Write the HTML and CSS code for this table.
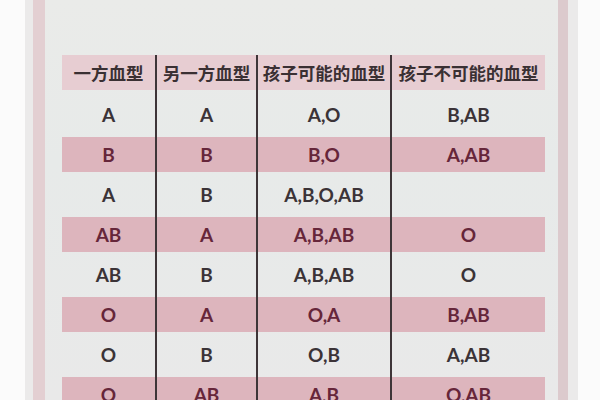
FILE: index.html
```html
<!DOCTYPE html>
<html lang="zh">
<head>
<meta charset="utf-8">
<link rel="stylesheet" href="styles.css">
</head>
<body>
<div class="sheet">
  <div class="panel">
    <div class="table">
      <div class="cell head">一方血型</div>
      <div class="cell head sep">另一方血型</div>
      <div class="cell head sep">孩子可能的血型</div>
      <div class="cell head sep">孩子不可能的血型</div>

      <div class="cell">A</div>
      <div class="cell sep">A</div>
      <div class="cell sep">A,O</div>
      <div class="cell sep">B,AB</div>

      <div class="cell pink">B</div>
      <div class="cell pink sep">B</div>
      <div class="cell pink sep">B,O</div>
      <div class="cell pink sep">A,AB</div>

      <div class="cell">A</div>
      <div class="cell sep">B</div>
      <div class="cell sep">A,B,O,AB</div>
      <div class="cell sep"></div>

      <div class="cell pink">AB</div>
      <div class="cell pink sep">A</div>
      <div class="cell pink sep">A,B,AB</div>
      <div class="cell pink sep">O</div>

      <div class="cell">AB</div>
      <div class="cell sep">B</div>
      <div class="cell sep">A,B,AB</div>
      <div class="cell sep">O</div>

      <div class="cell pink">O</div>
      <div class="cell pink sep">A</div>
      <div class="cell pink sep">O,A</div>
      <div class="cell pink sep">B,AB</div>

      <div class="cell">O</div>
      <div class="cell sep">B</div>
      <div class="cell sep">O,B</div>
      <div class="cell sep">A,AB</div>

      <div class="cell pink">O</div>
      <div class="cell pink sep">AB</div>
      <div class="cell pink sep">A,B</div>
      <div class="cell pink sep">O,AB</div>
    </div>
  </div>
</div>
</body>
</html>
```

FILE: styles.css
```css
html, body {
  margin: 0;
  padding: 0;
  background: #fbfbfb;
  height: 400px;
  overflow: hidden;
}
.sheet {
  margin: 0 22px 0 25px;
  height: 400px;
  background: #ebeaea;
  padding: 0 10px 0 8px;
}
.panel {
  height: 400px;
  box-sizing: border-box;
  border-left: 12px solid #e3cfd2;
  border-right: 10px solid #dccacd;
  background: linear-gradient(180deg, #eaebe9 0%, #e7eae9 40%, #e9e9e9 100%);
  padding: 55px 13px 0 17px;
}
.table {
  display: grid;
  grid-template-columns: 93px 101px 134px 155px;
  grid-template-rows: 39px repeat(8, 40px);
  font-family: "Lato", "Noto Sans CJK SC", sans-serif;
  font-weight: 700;
  font-size: 19px;
  color: #3b3337;
}
.cell {
  display: flex;
  align-items: center;
  justify-content: center;
}
.sep {
  border-left: 2px solid #3e3538;
}
.head {
  font-family: "Noto Sans CJK SC", sans-serif;
  font-weight: 700;
  font-size: 17.5px;
  color: #3a3033;
  padding-bottom: 4px;
  background: linear-gradient(#e7cdd2, #e7cdd2) no-repeat top / 100% 35px;
}
.pink {
  color: #66263a;
  background: linear-gradient(#ddb5bd, #ddb5bd) no-repeat center / 100% 35px;
}
```
